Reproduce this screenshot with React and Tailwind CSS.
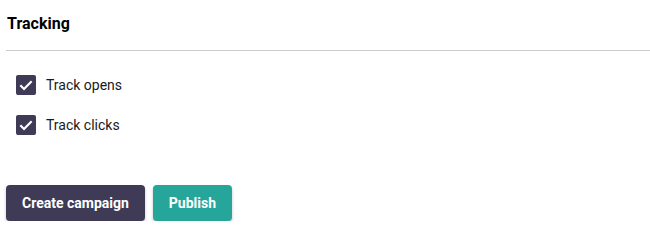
export default function App() {
  const options = ["Track opens", "Track clicks"];

  return (
    <div className="pl-[6px] bg-white text-black" style={{ fontFamily: "Roboto, sans-serif" }}>
      <div className="pt-[15px] pb-[17px] border-b border-[#cccccc]">
        <h3 className="pl-[1px] text-[16px] font-bold leading-[18px]">Tracking</h3>
      </div>

      <div className="pt-[24px] pl-[10px] flex flex-col gap-[20px]">
        {options.map((label) => (
          <label key={label} className="flex items-center gap-[10px] h-[20px]">
            <span className="w-[20px] h-[20px] rounded-[2px] bg-[#3f3b56] flex items-center justify-center">
              <svg width="16" height="16" viewBox="0 0 24 24" fill="none">
                <path d="M3.5 12.5l5.5 5.5L20.5 6.5" stroke="white" strokeWidth="3.2" strokeLinecap="butt" />
              </svg>
            </span>
            <span className="text-[14px] text-[#1a1a1a]">{label}</span>
          </label>
        ))}
      </div>

      <div className="pt-[50px] flex gap-[8px]">
        <button className="h-[36px] px-[16px] rounded-[4px] bg-[#3f3b56] text-white text-[14px] font-bold shadow-[0_2px_3px_rgba(0,0,0,0.25)]">
          Create campaign
        </button>
        <button className="h-[36px] px-[16px] rounded-[4px] bg-[#26a69a] text-white text-[14px] font-bold shadow-[0_2px_3px_rgba(0,0,0,0.25)]">
          Publish
        </button>
      </div>
    </div>
  );
}
